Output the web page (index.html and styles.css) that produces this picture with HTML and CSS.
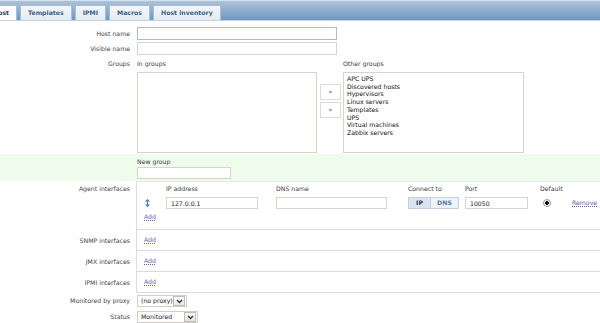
FILE: index.html
```html
<!DOCTYPE html>
<html lang="en">
<head>
    <meta charset="UTF-8">
    <meta name="viewport" content="width=device-width, initial-scale=1.0">
    <title>Host configuration</title>
    <link rel="stylesheet" href="styles.css">
</head>
<body>
    <div class="tabs">
        <span class="tab active">Host</span>
        <span class="tab">Templates</span>
        <span class="tab">IPMI</span>
        <span class="tab">Macros</span>
        <span class="tab">Host inventory</span>
    </div>

    <div class="form">
        <div class="row row-name">
            <div class="lbl">Host name</div>
            <div class="val"><input type="text" class="txt focused w-wide"></div>
        </div>
        <div class="row row-visible">
            <div class="lbl">Visible name</div>
            <div class="val"><input type="text" class="txt w-wide"></div>
        </div>

        <div class="row row-groups">
            <div class="lbl">Groups</div>
            <div class="val groups">
                <div class="group-col">
                    <div class="cap">In groups</div>
                    <div class="listbox"></div>
                </div>
                <div class="move-btns">
                    <span class="mbtn">&laquo;</span>
                    <span class="mbtn">&raquo;</span>
                </div>
                <div class="group-col">
                    <div class="cap">Other groups</div>
                    <div class="listbox">
                        <div>APC UPS</div>
                        <div>Discovered hosts</div>
                        <div>Hypervisors</div>
                        <div>Linux servers</div>
                        <div>Templates</div>
                        <div>UPS</div>
                        <div>Virtual machines</div>
                        <div>Zabbix servers</div>
                    </div>
                </div>
            </div>
        </div>

        <div class="row row-newgroup">
            <div class="lbl"></div>
            <div class="val">
                <div class="cap">New group</div>
                <input type="text" class="txt w-group">
            </div>
        </div>

        <div class="row row-agent">
            <div class="lbl">Agent interfaces</div>
            <div class="val iface agent">
                <div class="iface-grid">
                    <span></span>
                    <span class="head">IP address</span>
                    <span class="head">DNS name</span>
                    <span class="head">Connect to</span>
                    <span class="head">Port</span>
                    <span class="head">Default</span>
                    <span></span>

                    <span class="drag">
                        <svg width="5" height="8" viewBox="0 0 5 8">
                            <path d="M2.5 0 L5 2.5 H0 Z M2.5 8 L5 5.5 H0 Z" fill="#3f6fa8"/>
                            <rect x="2" y="2.5" width="1" height="3" fill="#3f6fa8"/>
                        </svg>
                    </span>
                    <span><input type="text" class="txt w-ip" value="127.0.0.1"></span>
                    <span><input type="text" class="txt w-dns"></span>
                    <span class="seg"><b class="on">IP</b><b>DNS</b></span>
                    <span><input type="text" class="txt w-port" value="10050"></span>
                    <span><span class="radio"></span></span>
                    <span><a class="link">Remove</a></span>
                </div>
                <a class="link add">Add</a>
            </div>
        </div>
        <div class="row row-iface">
            <div class="lbl">SNMP interfaces</div>
            <div class="val iface"><a class="link">Add</a></div>
        </div>
        <div class="row row-iface">
            <div class="lbl">JMX interfaces</div>
            <div class="val iface"><a class="link">Add</a></div>
        </div>
        <div class="row row-iface">
            <div class="lbl">IPMI interfaces</div>
            <div class="val iface"><a class="link">Add</a></div>
        </div>

        <div class="row row-proxy">
            <div class="lbl">Monitored by proxy</div>
            <div class="val">
                <span class="select sel-proxy"><span>(no proxy)</span><span class="arrow"><svg width="7" height="5" viewBox="0 0 7 5"><path d="M1 1 L3.5 3.5 L6 1" fill="none" stroke="#333" stroke-width="1.4"/></svg></span></span>
            </div>
        </div>
        <div class="row row-status">
            <div class="lbl">Status</div>
            <div class="val">
                <span class="select sel-status"><span>Monitored</span><span class="arrow"><svg width="7" height="5" viewBox="0 0 7 5"><path d="M1 1 L3.5 3.5 L6 1" fill="none" stroke="#333" stroke-width="1.4"/></svg></span></span>
            </div>
        </div>
    </div>
</body>
</html>
```

FILE: styles.css
```css
* {
    box-sizing: border-box;
}
body {
    margin: 0;
    background: #fff;
    font-family: "DejaVu Sans", Verdana, sans-serif;
    font-size: 6.2px;
    line-height: 8px;
    color: #3c3c3c;
    overflow: hidden;
}

/* tab strip */
.tabs {
    height: 21px;
    display: flex;
    align-items: flex-end;
    gap: 3px;
    margin-left: -15px;
    border-top: 1px solid #d6e0ec;
    border-bottom: 1px solid #c3d2e3;
    background: linear-gradient(#adc3da, #7097c0);
}
.tab {
    height: 15px;
    padding: 0 7px;
    display: flex;
    align-items: center;
    font-weight: bold;
    color: #3b5f8a;
    background: linear-gradient(#f4f7fb, #e2eaf3);
    border: 1px solid #a9bfd7;
    border-bottom: none;
}
.tab.active {
    background: #fff;
    color: #2b3e57;
}

/* form rows */
.row {
    display: flex;
}
.lbl {
    width: 136px;
    flex: none;
    padding-right: 6px;
    text-align: right;
    color: #444;
}
.val {
    flex: 1;
    padding-left: 1px;
}
.row-name {
    margin-top: 6px;
    align-items: center;
}
.row-visible {
    margin-top: 2px;
    align-items: center;
}
.txt {
    display: block;
    height: 13px;
    margin: 0;
    padding: 0 4px;
    border: 1px solid #d6d5cc;
    background: #fff;
    font: inherit;
    color: #222;
    outline: none;
}
.txt.focused {
    border-color: #a7bcdb;
}
.w-wide { width: 200px; }
.w-group { width: 94px; height: 12px; }
.w-ip { width: 92px; height: 12px; }
.w-dns { width: 111px; height: 12px; }
.w-port { width: 63px; height: 12px; }

/* groups */
.row-groups {
    margin-top: 5px;
}
.groups {
    display: flex;
}
.cap {
    height: 8px;
    margin-bottom: 4px;
}
.listbox {
    height: 81px;
    border: 1px solid #d6d5cc;
    padding: 2px 3px;
    line-height: 7.7px;
    color: #111;
}
.group-col:first-child .listbox {
    width: 180px;
}
.group-col:last-child .listbox {
    width: 181px;
}
.move-btns {
    width: 26px;
    padding: 24px 0 0 3px;
    display: flex;
    flex-direction: column;
    gap: 2px;
}
.mbtn {
    width: 21px;
    height: 16px;
    border: 1px solid #dcdcd6;
    background: #fff;
    display: flex;
    align-items: center;
    justify-content: center;
    font-size: 7px;
    color: #666;
}

/* new group band */
.row-newgroup {
    margin-top: 1px;
    height: 27px;
    padding-top: 4px;
    background: #eefcec;
}
.row-newgroup .cap {
    margin-bottom: 1px;
}

/* interface blocks */
.val.iface {
    padding-left: 0;
    border-left: 1px solid #d6dcec;
    border-bottom: 1px solid #d3daec;
}
.row-agent .val.iface {
    border-top: 1px solid #e3e7f0;
    padding: 3px 0 8px 0;
}
.row-agent .lbl {
    padding-top: 4px;
}
.iface-grid {
    display: grid;
    grid-template-columns: 29px 110px 132px 57px 75px 32px auto;
    row-gap: 4px;
    align-items: center;
}
.drag {
    padding-left: 8px;
    display: flex;
}
.seg {
    display: flex;
    width: 51px;
    height: 12px;
    border: 1px solid #c2d0df;
}
.seg b {
    flex: 1;
    display: flex;
    align-items: center;
    justify-content: center;
    background: #eef3f8;
    color: #5b7ea6;
}
.seg b.on {
    flex: none;
    width: 22px;
    background: #dbe5f0;
    color: #2e3a48;
    border-right: 1px solid #c2d0df;
}
.radio {
    display: block;
    width: 8px;
    height: 8px;
    margin-left: 3px;
    border-radius: 50%;
    border: 1px solid #9a9a9a;
    background: radial-gradient(circle, #111 0 1.6px, #f3f3f3 2px);
}
.link {
    color: #5c5ea8;
    text-decoration: underline dotted;
    text-underline-offset: 1px;
}
.add {
    display: inline-block;
    margin: 4px 0 0 7px;
}
.row-iface .lbl,
.row-iface .val {
    height: 21px;
    display: flex;
    align-items: center;
}
.row-iface .lbl {
    justify-content: flex-end;
}
.row-iface .val .link {
    margin-left: 7px;
}

/* selects */
.row-proxy {
    margin-top: 2px;
    align-items: center;
}
.row-status {
    margin-top: 4px;
    align-items: center;
}
.select {
    display: flex;
    align-items: center;
    justify-content: space-between;
    height: 12px;
    padding: 0 1px 0 3px;
    border: 1px solid #cfcfc8;
    background: #fff;
    color: #222;
}
.sel-proxy { width: 50px; }
.sel-status { width: 61px; }
.arrow {
    width: 12px;
    height: 10px;
    border: 1px solid #bdbdb5;
    background: linear-gradient(#fafafa, #e6e6e6);
    display: flex;
    align-items: center;
    justify-content: center;
}
```
